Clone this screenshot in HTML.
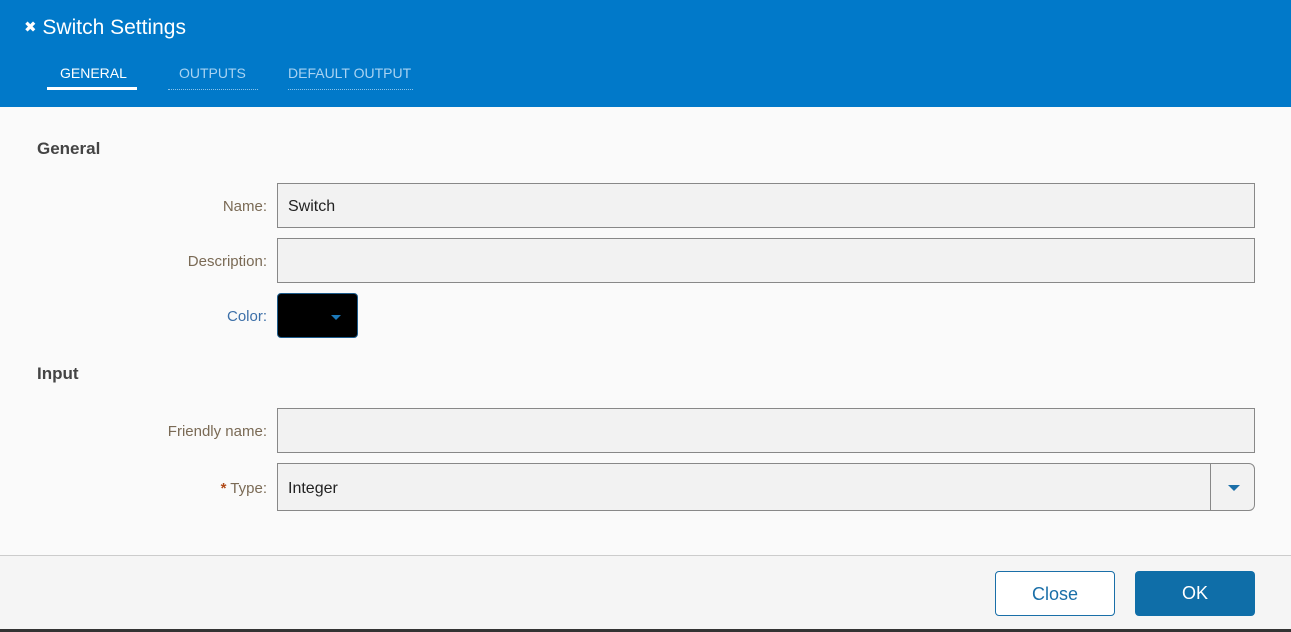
<!DOCTYPE html>
<html><head><style>
*{box-sizing:border-box;margin:0;padding:0}
body{width:1291px;height:632px;overflow:hidden;background:#fafafa;font-family:"Liberation Sans",sans-serif;position:relative}
.hdr{position:absolute;left:0;top:0;width:1291px;height:107px;background:#0179c9}
.title{position:absolute;left:24px;top:16px;color:#fff;font-size:21px}
.tab{position:absolute;top:65px;font-size:14px;color:#a9d3f2}
.sec{position:absolute;left:37px;font-size:17px;font-weight:bold;color:#444}
.lbl{position:absolute;right:1024px;font-size:15px;color:#7a6a55;text-align:right}
.inp{position:absolute;left:277px;width:978px;height:45px;background:#f2f2f2;border:1px solid #888;font-size:16px;color:#222;padding:14px 10px}
.ftr{position:absolute;left:0;top:555px;width:1291px;height:74px;background:#f5f5f5;border-top:1px solid #ccc}
.btn{position:absolute;top:571px;width:120px;height:45px;border-radius:4px;font-size:18px;text-align:center;line-height:45px}
</style></head><body>
<div class="hdr">
<div class="title"><span style="font-size:15px;position:relative;top:-2px">✖</span> Switch Settings</div>
<div class="tab" style="left:60px;color:#fff">GENERAL</div>
<div style="position:absolute;left:47px;top:87px;width:90px;height:3px;background:#fff"></div>
<div class="tab" style="left:179px">OUTPUTS</div>
<div style="position:absolute;left:168px;top:89px;width:90px;border-top:1px dotted #8cc3ea"></div>
<div class="tab" style="left:288px">DEFAULT OUTPUT</div>
<div style="position:absolute;left:288px;top:89px;width:125px;border-top:1px dotted #8cc3ea"></div>
</div>
<div class="sec" style="top:139px">General</div>
<div class="lbl" style="top:198px">Name:</div>
<div class="inp" style="top:183px">Switch</div>
<div class="lbl" style="top:253px">Description:</div>
<div class="inp" style="top:238px"></div>
<div class="lbl" style="top:308px;color:#3c6fa8">Color:</div>
<div style="position:absolute;left:277px;top:293px;width:81px;height:45px;background:#000;border:1px solid #1d5c8c;border-radius:4px"><div style="position:absolute;left:53px;top:21px;border-left:5px solid transparent;border-right:5px solid transparent;border-top:5px solid #1b78b8"></div></div>
<div class="sec" style="top:364px">Input</div>
<div class="lbl" style="top:423px">Friendly name:</div>
<div class="inp" style="top:408px"></div>
<div class="lbl" style="top:480px"><span style="color:#b04a18;font-weight:bold">*</span> Type:</div>
<div class="inp" style="top:463px;height:48px;border-radius:0 6px 6px 0;padding-top:16px">Integer
<div style="position:absolute;left:932px;top:0;width:1px;height:46px;background:#888"></div>
<div style="position:absolute;left:950px;top:21px;border-left:6px solid transparent;border-right:6px solid transparent;border-top:6px solid #1b6fa8"></div></div>
<div class="ftr"></div>
<div class="btn" style="left:995px;border:1px solid #1a6fa8;color:#1a6fa8;background:#fff">Close</div>
<div class="btn" style="left:1135px;background:#0f6ea8;color:#fff">OK</div>
<div style="position:absolute;left:0;top:629px;width:1291px;height:3px;background:#333"></div>
</body></html>
